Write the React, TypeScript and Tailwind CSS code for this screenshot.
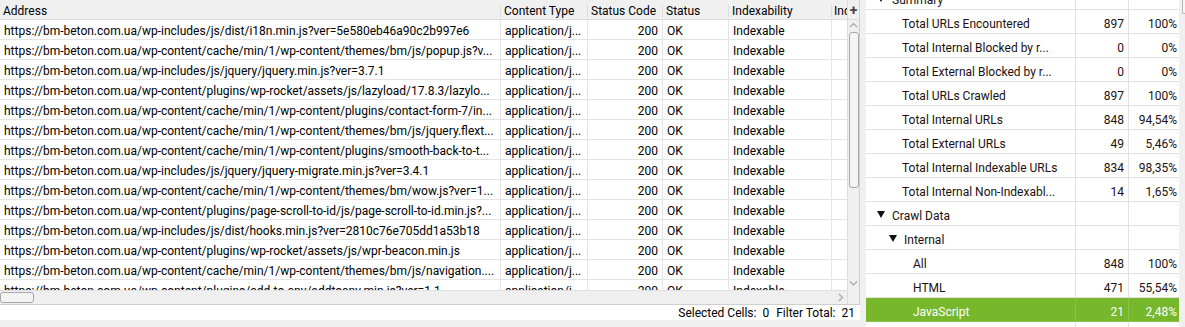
import React from "react";

const urls = [
  "https://bm-beton.com.ua/wp-includes/js/dist/i18n.min.js?ver=5e580eb46a90c2b997e6",
  "https://bm-beton.com.ua/wp-content/cache/min/1/wp-content/themes/bm/js/popup.js?v...",
  "https://bm-beton.com.ua/wp-includes/js/jquery/jquery.min.js?ver=3.7.1",
  "https://bm-beton.com.ua/wp-content/plugins/wp-rocket/assets/js/lazyload/17.8.3/lazylo...",
  "https://bm-beton.com.ua/wp-content/cache/min/1/wp-content/plugins/contact-form-7/in...",
  "https://bm-beton.com.ua/wp-content/cache/min/1/wp-content/themes/bm/js/jquery.flext...",
  "https://bm-beton.com.ua/wp-content/cache/min/1/wp-content/plugins/smooth-back-to-t...",
  "https://bm-beton.com.ua/wp-includes/js/jquery/jquery-migrate.min.js?ver=3.4.1",
  "https://bm-beton.com.ua/wp-content/cache/min/1/wp-content/themes/bm/wow.js?ver=1...",
  "https://bm-beton.com.ua/wp-content/plugins/page-scroll-to-id/js/page-scroll-to-id.min.js?...",
  "https://bm-beton.com.ua/wp-includes/js/dist/hooks.min.js?ver=2810c76e705dd1a53b18",
  "https://bm-beton.com.ua/wp-content/plugins/wp-rocket/assets/js/wpr-beacon.min.js",
  "https://bm-beton.com.ua/wp-content/cache/min/1/wp-content/themes/bm/js/navigation....",
  "https://bm-beton.com.ua/wp-content/plugins/add-to-any/addtoany.min.js?ver=1.1",
];

type TreeRow = {
  label: string;
  indent: number;
  arrow?: boolean;
  count?: string;
  pct?: string;
  active?: boolean;
};

const tree: TreeRow[] = [
  { label: "Summary", indent: 0, arrow: true },
  { label: "Total URLs Encountered", indent: 1, count: "897", pct: "100%" },
  { label: "Total Internal Blocked by r...", indent: 1, count: "0", pct: "0%" },
  { label: "Total External Blocked by r...", indent: 1, count: "0", pct: "0%" },
  { label: "Total URLs Crawled", indent: 1, count: "897", pct: "100%" },
  { label: "Total Internal URLs", indent: 1, count: "848", pct: "94,54%" },
  { label: "Total External URLs", indent: 1, count: "49", pct: "5,46%" },
  { label: "Total Internal Indexable URLs", indent: 1, count: "834", pct: "98,35%" },
  { label: "Total Internal Non-Indexabl...", indent: 1, count: "14", pct: "1,65%" },
  { label: "Crawl Data", indent: 0, arrow: true },
  { label: "Internal", indent: 1, arrow: true },
  { label: "All", indent: 2, count: "848", pct: "100%" },
  { label: "HTML", indent: 2, count: "471", pct: "55,54%" },
  { label: "JavaScript", indent: 2, count: "21", pct: "2,48%", active: true },
  { label: "CSS", indent: 2, count: "15", pct: "1,77%" },
];

const Chevron = ({ dir }: { dir: "up" | "down" | "right" }) => {
  const d =
    dir === "up" ? "M1 5 L4.5 1.5 L8 5" : dir === "down" ? "M1 1.5 L4.5 5 L8 1.5" : "M2 1 L5.5 4.5 L2 8";
  return (
    <svg width="9" height="9" viewBox="0 0 9 9" fill="none">
      <path d={d} stroke="#a6a6a6" strokeWidth="1.2" />
    </svg>
  );
};

const Triangle = () => (
  <svg width="8" height="7" viewBox="0 0 8 7">
    <path d="M0 0 L8 0 L4 7 Z" fill="#111" />
  </svg>
);

const CrawlTable = () => {
  return (
    <div className="flex h-[305px] w-[860px] border-r border-b border-[#cfcfcf] bg-[#f0f0f0]">
      <div className="flex w-[847px] flex-col">
        <div className="flex h-[20px] shrink-0 items-center border-b border-[#dcdcdc] bg-[#f0f0f0] pt-[3px] text-black">
          <div className="w-[501px] shrink-0 border-r border-[#dcdcdc] pl-[3px]">Address</div>
          <div className="w-[87px] shrink-0 border-r border-[#dcdcdc] pl-[3px]">Content Type</div>
          <div className="w-[75px] shrink-0 border-r border-[#dcdcdc] pl-[3px]">Status Code</div>
          <div className="w-[66px] shrink-0 border-r border-[#dcdcdc] pl-[3px]">Status</div>
          <div className="w-[103px] shrink-0 border-r border-[#dcdcdc] pl-[3px]">Indexability</div>
          <div className="w-[15px] shrink-0 overflow-hidden whitespace-nowrap pl-[2px]">Indexability Status</div>
        </div>
        <div className="h-[270px] shrink-0 overflow-hidden bg-white">
          {urls.map((url) => (
            <div key={url} className="flex h-[20px] border-b border-[#e4e4e4] text-black">
              <div className="flex w-[501px] shrink-0 items-center overflow-hidden whitespace-nowrap border-r border-[#e4e4e4] pl-[4px] pt-[2px]">
                {url}
              </div>
              <div className="flex w-[87px] shrink-0 items-center border-r border-[#e4e4e4] pl-[4px] pt-[2px]">application/j...</div>
              <div className="flex w-[75px] shrink-0 items-center justify-end border-r border-[#e4e4e4] pr-[4px] pt-[2px]">200</div>
              <div className="flex w-[66px] shrink-0 items-center border-r border-[#e4e4e4] pl-[4px] pt-[2px]">OK</div>
              <div className="flex w-[103px] shrink-0 items-center border-r border-[#e4e4e4] pl-[4px] pt-[2px]">Indexable</div>
              <div className="w-[15px] shrink-0" />
            </div>
          ))}
        </div>
        <div className="flex h-[14px] shrink-0 items-center border-t border-[#e0e0e0] bg-[#efefef]">
          <div className="h-[11px] w-[34px] rounded-[3px] border border-[#a8a8a8] bg-[#f4f4f4]" />
          <div className="flex-1" />
          <div className="mr-[1px] flex w-[9px] items-center justify-center">
            <Chevron dir="right" />
          </div>
        </div>
      </div>
      <div className="flex w-[13px] flex-col border-l border-[#dcdcdc]">
        <div className="flex h-[20px] shrink-0 items-center justify-center border-b border-[#dcdcdc] text-[14px] font-bold leading-none text-[#444]">
          +
        </div>
        <div className="flex flex-1 flex-col items-center bg-[#f0f0f0]">
          <div className="mt-[2px]">
            <Chevron dir="up" />
          </div>
          <div className="mt-[1px] h-[156px] w-[10px] rounded-[3px] border border-[#a8a8a8] bg-[#f4f4f4]" />
          <div className="flex-1" />
          <div className="mb-[1px]">
            <Chevron dir="down" />
          </div>
        </div>
        <div className="h-[14px] shrink-0 bg-[#efefef]" />
      </div>
    </div>
  );
};

const Overview = () => {
  return (
    <div className="flex h-[327px] w-[313px] flex-col overflow-hidden bg-white">
      <div className="-mt-[14px]">
        {tree.map((row) => (
          <div
            key={row.label}
            className={`flex h-[24px] border-b ${row.active ? "border-[#8cc44a] bg-[#76b72b] text-white" : "border-[#e2e2e2] text-[#1c1010]"}`}
          >
            <div
              className={`flex w-[209px] shrink-0 items-center overflow-hidden whitespace-nowrap pt-[4px] ${
                row.indent === 0 ? "pl-[11px]" : row.indent === 1 ? (row.arrow ? "pl-[23px]" : "pl-[36px]") : "pl-[47px]"
              }`}
            >
              {row.arrow && (
                <span className="mr-[7px] -mt-[2px] flex items-center">
                  <Triangle />
                </span>
              )}
              {row.label}
            </div>
            <div
              className={`flex w-[53px] shrink-0 items-center justify-end border-l pr-[4px] pt-[4px] ${row.active ? "border-[#8cc44a]" : "border-[#e2e2e2]"}`}
            >
              {row.count}
            </div>
            <div
              className={`flex w-[51px] shrink-0 items-center justify-end border-l pr-[2px] pt-[4px] ${row.active ? "border-[#8cc44a]" : "border-[#e2e2e2]"}`}
            >
              {row.pct}
            </div>
          </div>
        ))}
      </div>
    </div>
  );
};

export default function App() {
  return (
    <div className="flex h-[327px] w-[1185px] overflow-hidden bg-[#f0f0f0] font-['Roboto',sans-serif] text-[12px] leading-none">
      <div className="flex w-[860px] shrink-0 flex-col">
        <CrawlTable />
        <div className="flex h-[15px] shrink-0 items-center justify-end gap-[6px] bg-white pr-[5px] pt-[1px] text-black">
          <span>Selected Cells:</span>
          <span className="mr-[1px]">0</span>
          <span>Filter Total:</span>
          <span>21</span>
        </div>
        <div className="flex-1 bg-[#f0f0f0]" />
      </div>
      <div className="w-[6px] shrink-0 bg-[#f0f0f0]" />
      <Overview />
      <div className="flex w-[6px] shrink-0 flex-col bg-[#f0f0f0]">
        <div className="ml-[3px] h-[14px] w-[3px] rounded-bl-[2px] border-b border-l border-[#b8b8b8] bg-[#f6f6f6]" />
      </div>
    </div>
  );
}
